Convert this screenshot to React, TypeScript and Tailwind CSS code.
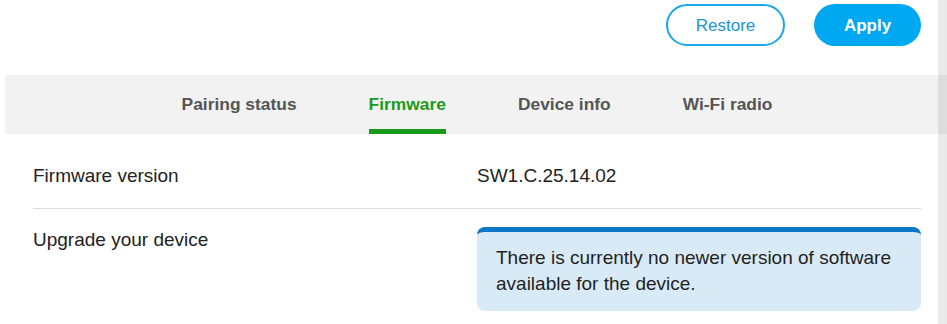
import React from 'react';

const tabs = ['Pairing status', 'Firmware', 'Device info', 'Wi-Fi radio'];

// --- Firmware settings panel ---
const App: React.FC = () => {
  const active = 'Firmware';

  return (
    <div
      className="flex w-[947px] h-[324px] bg-white overflow-hidden text-[#222]"
      style={{ fontFamily: '"Liberation Sans", Arial, sans-serif' }}
    >
      <div className="flex-1 flex flex-col">
        {/* Actions */}
        <div className="flex justify-end gap-[29px] pt-[4px] pr-[17px]">
          <button className="w-[119px] h-[42px] rounded-full border-2 border-[#1ba6ea] text-[#1b93d3] text-[17px] bg-white pt-[2px]">
            Restore
          </button>
          <button className="w-[107px] h-[42px] rounded-full bg-[#00a7f1] text-white text-[17px] font-bold pt-[2px]">
            Apply
          </button>
        </div>

        {/* Tabs */}
        <div className="mt-[29px] ml-[5px] h-[59px] bg-[#f2f2f2] flex justify-center gap-[72px] pl-[11px]">
          {tabs.map((tab) => (
            <div key={tab} className="relative flex items-center h-full pb-[1px]">
              <span
                className={
                  tab === active
                    ? 'text-[17.4px] font-bold text-[#1a9b1a]'
                    : 'text-[17.4px] font-bold text-[#555]'
                }
              >
                {tab}
              </span>
              {tab === active && (
                <div className="absolute left-0 right-0 bottom-0 h-[5px] bg-[#17991a]" />
              )}
            </div>
          ))}
        </div>

        {/* Rows */}
        <div className="mx-[33px] mr-[17px]">
          <div className="grid grid-cols-2 pt-[29px] pb-[19px] border-b border-[#dcdcdc] text-[19px] leading-[26px]">
            <div>Firmware version</div>
            <div>SW1.C.25.14.02</div>
          </div>
          <div className="grid grid-cols-2 pt-[18px] text-[19px] leading-[26px]">
            <div>Upgrade your device</div>
            <div className="rounded-lg border-t-[5px] border-[#0b76c6] bg-[#d9eaf7] pl-[19px] pr-[12px] pt-[13px] pb-[14px] text-[#1f1f1f]">
              There is currently no newer version of software available for the device.
            </div>
          </div>
        </div>
      </div>

      {/* Scrollbar track */}
      <div className="w-[9px] flex flex-col bg-[#e9e9e9]">
        <div className="h-[75px]" />
        <div className="h-[59px] bg-[#dddddd]" />
      </div>
    </div>
  );
};

export default App;
